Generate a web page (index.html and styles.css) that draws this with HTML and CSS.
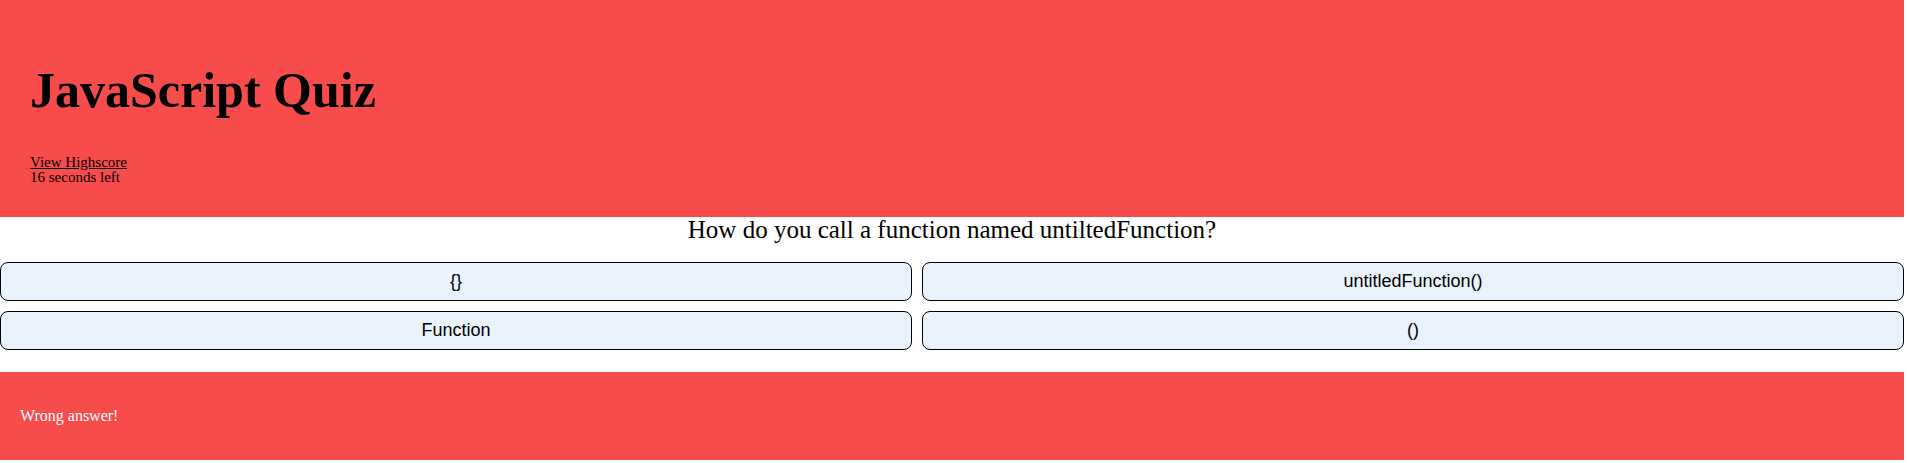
FILE: index.html
```html
<!DOCTYPE html>
<html lang="en">
<head>
<meta charset="utf-8">
<title>JavaScript Quiz</title>
<link rel="stylesheet" href="styles.css">
</head>
<body>
<div class="page">
  <header class="header">
    <h1 class="title">JavaScript Quiz</h1>
    <div class="meta">
      <a class="highscore" href="#">View Highscore</a>
      <div class="timer">16 seconds left</div>
    </div>
  </header>
  <main class="quiz">
    <h2 class="question">How do you call a function named untiltedFunction?</h2>
    <div class="answers">
      <button class="answer">{}</button>
      <button class="answer">untitledFunction()</button>
      <button class="answer">Function</button>
      <button class="answer">()</button>
    </div>
  </main>
  <footer class="result">
    <p class="result-text">Wrong answer!</p>
  </footer>
</div>
</body>
</html>
```
FILE: styles.css
```css
html, body {
  margin: 0;
  padding: 0;
  background: #ffffff;
}

body {
  font-family: "Liberation Serif", "Times New Roman", serif;
  color: #000;
}

.page {
  margin-right: 3px;
}

.header {
  background: #f84b4b;
  padding: 61px 30px 33px;
}

.title {
  margin: 0 0 36px;
  font-size: 50px;
  line-height: 58px;
  font-weight: bold;
}

.meta {
  font-size: 15px;
  line-height: 14.5px;
}

.highscore {
  color: #000;
  text-decoration: underline;
}

.quiz {
  padding-bottom: 22px;
}

.question {
  margin: 0 0 20px;
  font-size: 25px;
  line-height: 25px;
  font-weight: normal;
  text-align: center;
}

.answers {
  display: grid;
  grid-template-columns: auto auto;
  gap: 10px;
}

.answer {
  font-family: "Liberation Sans", Arial, sans-serif;
  font-size: 18px;
  line-height: 21px;
  padding: 8px 6px;
  background: #eaf2fe;
  border: 1px solid #000;
  border-radius: 8px;
  color: #000;
  text-align: center;
  margin: 0;
}

.result {
  background: #f84b4b;
  padding: 35px 20px;
}

.result-text {
  margin: 0;
  color: #fff;
  font-size: 16px;
  line-height: 18px;
}
```
